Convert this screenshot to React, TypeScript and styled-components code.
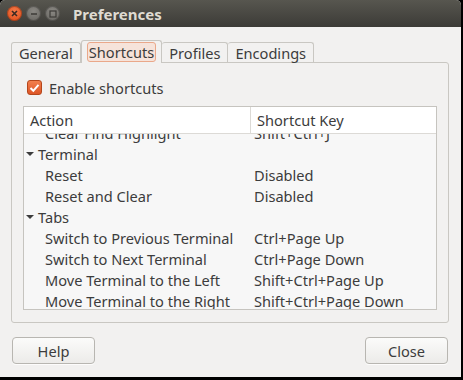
import React from 'react';
import styled, { createGlobalStyle } from 'styled-components';

const GlobalStyle = createGlobalStyle`
  html, body {
    margin: 0;
    padding: 0;
    background: #000;
  }
  body {
    width: 463px;
    height: 380px;
    overflow: hidden;
    font-family: 'Noto Sans', 'DejaVu Sans', sans-serif;
  }
`;

const Window = styled.div`
  width: 461px;
  height: 377px;
  display: flex;
  flex-direction: column;
  background: #f2f1f0;
  border-radius: 5px 5px 0 0;
  overflow: hidden;
  color: #3c3c3c;
  font-size: 14.6px;
`;

const TitleBar = styled.div`
  height: 27px;
  flex: none;
  display: flex;
  align-items: center;
  padding-left: 7px;
  background: linear-gradient(#57564f, #3c3b37);
`;

const WinButton = styled.span<{ $close?: boolean }>`
  width: 15px;
  height: 15px;
  border-radius: 50%;
  margin-right: 4px;
  display: flex;
  align-items: center;
  justify-content: center;
  background: ${(p) =>
    p.$close
      ? 'radial-gradient(circle at 50% 35%, #f47a4a, #dd4814)'
      : 'radial-gradient(circle at 50% 35%, #8a8883, #64625d)'};
  box-shadow: inset 0 0 0 1px rgba(0, 0, 0, 0.25);
`;

const Title = styled.span`
  margin-left: 9px;
  color: #dfdbd2;
  font-weight: bold;
  font-size: 15px;
`;

const Body = styled.div`
  flex: 1;
  display: flex;
  flex-direction: column;
  padding: 13px 12px 14px 11px;
`;

const TabRow = styled.div`
  display: flex;
  align-items: flex-end;
  height: 22px;
  position: relative;
  z-index: 1;
`;

const Tab = styled.div<{ $active?: boolean }>`
  height: ${(p) => (p.$active ? '23px' : '20px')};
  margin-bottom: ${(p) => (p.$active ? '-1px' : '0')};
  box-sizing: border-box;
  display: flex;
  align-items: center;
  justify-content: center;
  padding: 0 ${(p) => (p.$active ? '5px' : '7px')};
  border: 1px solid #c9c7c2;
  border-bottom: none;
  border-left-width: ${(p) => (p.$active ? '1px' : '0')};
  border-radius: 3px 3px 0 0;
  background: #f2f1f0;
  &:first-child {
    border-left-width: 1px;
  }
`;

const FocusLabel = styled.span<{ $focus?: boolean }>`
  padding: 0 ${(p) => (p.$focus ? '1px' : '0')};
  height: 18px;
  line-height: 18px;
  border-radius: 3px;
  border: ${(p) => (p.$focus ? '1px solid #eaa88a' : 'none')};
  background: ${(p) => (p.$focus ? '#f6e3da' : 'transparent')};
`;

const Panel = styled.div`
  height: 261px;
  box-sizing: border-box;
  border: 1px solid #c9c7c2;
  border-radius: 0 3px 3px 3px;
  padding: 17px 11px 12px 11px;
  display: flex;
  flex-direction: column;
`;

const CheckRow = styled.label`
  display: flex;
  align-items: center;
  padding-left: 4px;
  height: 15px;
  gap: 7px;
`;

const CheckBox = styled.span`
  width: 15px;
  height: 15px;
  box-sizing: border-box;
  border-radius: 3px;
  border: 1px solid #b5471c;
  background: linear-gradient(#f2804e, #dd5526);
  display: flex;
  align-items: center;
  justify-content: center;
`;

const Tree = styled.div`
  margin-top: 11px;
  flex: 1;
  min-height: 0;
  border: 1px solid #c6c4bf;
  background: #f7f7f7;
  display: flex;
  flex-direction: column;
  overflow: hidden;
`;

const HeaderRow = styled.div`
  height: 26px;
  flex: none;
  display: grid;
  grid-template-columns: 226px 1fr;
  background: #ffffff;
  border-bottom: 1px solid #dcdad6;
`;

const HeaderCell = styled.div<{ $divider?: boolean }>`
  display: flex;
  align-items: center;
  padding-left: 6px;
  border-left: ${(p) => (p.$divider ? '1px solid #dcdad6' : 'none')};
`;

const Viewport = styled.div`
  flex: 1;
  min-height: 0;
  overflow: hidden;
`;

const Rows = styled.div`
  margin-top: -12px;
`;

const Row = styled.div`
  height: 21px;
  display: grid;
  grid-template-columns: 227px 1fr;
  align-items: center;
`;

const NameCell = styled.div<{ $depth: number }>`
  display: flex;
  align-items: center;
  padding-left: ${(p) => (p.$depth ? 21 : 1)}px;
  white-space: nowrap;
`;

const Expander = styled.span`
  width: 0;
  height: 0;
  margin: 0 4px 0 1px;
  border-left: 4px solid transparent;
  border-right: 4px solid transparent;
  border-top: 4px solid #3c3c3c;
`;

const KeyCell = styled.div`
  padding-left: 3px;
  white-space: nowrap;
`;

const Footer = styled.div`
  margin-top: 14px;
  display: flex;
  justify-content: space-between;
  padding-left: 1px;
  padding-right: 1px;
`;

const Button = styled.button`
  width: 83px;
  height: 27px;
  border: 1px solid #b8b6b1;
  border-radius: 4px;
  background: linear-gradient(#fbfbfa, #ecebe9);
  font: inherit;
  color: #3c3c3c;
  box-shadow: 0 1px 0 rgba(255, 255, 255, 0.8);
`;

const CloseIcon = () => (
  <svg width="7" height="7" viewBox="0 0 7 7">
    <path d="M1 1L6 6M6 1L1 6" stroke="#3b2a22" strokeWidth="1.6" />
  </svg>
);

const MinIcon = () => (
  <svg width="8" height="8" viewBox="0 0 8 8">
    <path d="M1 4H7" stroke="#3c3b37" strokeWidth="1.5" />
  </svg>
);

const MaxIcon = () => (
  <svg width="8" height="8" viewBox="0 0 8 8">
    <rect x="1" y="1" width="6" height="6" fill="none" stroke="#3c3b37" strokeWidth="1.2" />
  </svg>
);

const Check = () => (
  <svg width="11" height="10" viewBox="0 0 11 10">
    <path d="M1.5 5L4.3 7.8L9.5 1.8" fill="none" stroke="#fff" strokeWidth="2" />
  </svg>
);

type Item = { name: string; key?: string; depth: number; group?: boolean };

const items: Item[] = [
  { name: 'Clear Find Highlight', key: 'Shift+Ctrl+J', depth: 1 },
  { name: 'Terminal', depth: 0, group: true },
  { name: 'Reset', key: 'Disabled', depth: 1 },
  { name: 'Reset and Clear', key: 'Disabled', depth: 1 },
  { name: 'Tabs', depth: 0, group: true },
  { name: 'Switch to Previous Terminal', key: 'Ctrl+Page Up', depth: 1 },
  { name: 'Switch to Next Terminal', key: 'Ctrl+Page Down', depth: 1 },
  { name: 'Move Terminal to the Left', key: 'Shift+Ctrl+Page Up', depth: 1 },
  { name: 'Move Terminal to the Right', key: 'Shift+Ctrl+Page Down', depth: 1 },
];

const tabs = ['General', 'Shortcuts', 'Profiles', 'Encodings'];

const App = () => {
  return (
    <>
      <GlobalStyle />
      <Window>
        <TitleBar>
          <WinButton $close>
            <CloseIcon />
          </WinButton>
          <WinButton>
            <MinIcon />
          </WinButton>
          <WinButton>
            <MaxIcon />
          </WinButton>
          <Title>Preferences</Title>
        </TitleBar>
        <Body>
          <div>
            <TabRow>
              {tabs.map((t) => (
                <Tab key={t} $active={t === 'Shortcuts'}>
                  <FocusLabel $focus={t === 'Shortcuts'}>{t}</FocusLabel>
                </Tab>
              ))}
            </TabRow>
            <Panel>
              <CheckRow>
                <CheckBox>
                  <Check />
                </CheckBox>
                Enable shortcuts
              </CheckRow>
              <Tree>
                <HeaderRow>
                  <HeaderCell>Action</HeaderCell>
                  <HeaderCell $divider>Shortcut Key</HeaderCell>
                </HeaderRow>
                <Viewport>
                  <Rows>
                    {items.map((it) => (
                      <Row key={it.name}>
                        <NameCell $depth={it.depth}>
                          {it.group && <Expander />}
                          {it.name}
                        </NameCell>
                        <KeyCell>{it.key}</KeyCell>
                      </Row>
                    ))}
                  </Rows>
                </Viewport>
              </Tree>
            </Panel>
          </div>
          <Footer>
            <Button>Help</Button>
            <Button>Close</Button>
          </Footer>
        </Body>
      </Window>
    </>
  );
};

export default App;
